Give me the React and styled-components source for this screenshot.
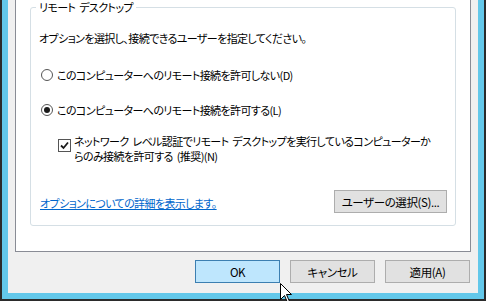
import React from "react";
import styled, { createGlobalStyle } from "styled-components";

const GlobalStyle = createGlobalStyle`
  html, body {
    margin: 0;
    padding: 0;
  }
  body {
    width: 486px;
    height: 301px;
    overflow: hidden;
    font-family: "Noto Sans CJK JP", "Noto Sans", sans-serif;
    font-feature-settings: "palt";
    letter-spacing: -0.6px;
    word-spacing: 2px;
    color: #000;
  }
`;

const Window = styled.div`
  position: relative;
  box-sizing: border-box;
  width: 486px;
  height: 301px;
  background: #63c8ea;
  border: 2px solid #2b2b2b;
  border-top: none;
  padding: 0 6px 6px;
`;

const Panel = styled.div`
  box-sizing: border-box;
  height: 293px;
  background: #f0f0f0;
  padding: 0 7px;
  display: flex;
  flex-direction: column;
`;

const TabPage = styled.div`
  box-sizing: border-box;
  height: 252px;
  background: #fff;
  border: 1px solid #898c95;
  border-top: none;
  padding: 0 14px;
`;

const GroupBox = styled.fieldset`
  margin: 0;
  padding: 0 8px 12px;
  border: 1px solid #d5dfe5;
  border-radius: 3px;
  display: flex;
  flex-direction: column;
  font-size: 11px;
`;

const Title = styled.legend`
  font-size: 11px;
  line-height: 14px;
  padding: 0 3px;
  margin-left: -3px;
`;

const Intro = styled.div`
  margin-top: 16px;
  line-height: 16px;
  white-space: nowrap;
`;

const OptionRow = styled.label`
  display: flex;
  align-items: center;
  gap: 4px;
  margin-top: ${(p) => p.$gap}px;
  margin-left: 2px;
  line-height: 16px;
  white-space: nowrap;
`;

const Radio = styled.span`
  box-sizing: border-box;
  width: 12px;
  height: 12px;
  border-radius: 50%;
  border: 1px solid #555;
  background: #fff;
  display: flex;
  align-items: center;
  justify-content: center;
  flex: none;

  &::after {
    content: "";
    width: 6px;
    height: 6px;
    border-radius: 50%;
    background: ${(p) => (p.$checked ? "#1a1a1a" : "transparent")};
  }
`;

const CheckRow = styled.label`
  display: flex;
  align-items: flex-start;
  gap: 3px;
  margin-top: 16px;
  margin-left: 19px;
  line-height: 15px;
  white-space: nowrap;
`;

const CheckBox = styled.span`
  box-sizing: border-box;
  width: 13px;
  height: 13px;
  margin-top: 5px;
  border: 1px solid #555;
  background: #fff;
  display: flex;
  align-items: center;
  justify-content: center;
  flex: none;
`;

const FooterRow = styled.div`
  display: flex;
  align-items: center;
  justify-content: space-between;
  margin-top: 26px;
`;

const Link = styled.a`
  color: #0066cc;
  text-decoration: underline;
  line-height: 16px;
  margin-left: 1px;
  margin-top: 3px;
  white-space: nowrap;
  cursor: pointer;
`;

const Button = styled.button`
  box-sizing: border-box;
  width: ${(p) => p.$width}px;
  height: 23px;
  padding: 0;
  font-family: inherit;
  font-feature-settings: "palt";
  letter-spacing: -0.4px;
  font-size: 11.5px;
  color: #000;
  background: ${(p) => (p.$primary ? "#bee6fd" : "#e1e1e1")};
  border: 1px solid ${(p) => (p.$primary ? "#3c7fb1" : "#adadad")};
  border-radius: 0;
`;

const ButtonBar = styled.div`
  display: flex;
  justify-content: flex-end;
  gap: 10px;
  padding: 8px 1px 0 0;
`;

const Cursor = styled.svg`
  position: absolute;
  left: 278px;
  top: 283px;
`;

export default function App() {
  return (
    <>
      <GlobalStyle />
      <Window>
        <Panel>
          <TabPage>
            <GroupBox>
              <Title>リモート デスクトップ</Title>
              <Intro>オプションを選択し、接続できるユーザーを指定してください。</Intro>
              <OptionRow $gap={21}>
                <Radio />
                このコンピューターへのリモート接続を許可しない(D)
              </OptionRow>
              <OptionRow $gap={19}>
                <Radio $checked />
                このコンピューターへのリモート接続を許可する(L)
              </OptionRow>
              <CheckRow>
                <CheckBox>
                  <svg width="9" height="9" viewBox="0 0 9 9">
                    <path d="M1 4.5 L3.5 7 L8 1.5" fill="none" stroke="#1a1a1a" strokeWidth="1.8" />
                  </svg>
                </CheckBox>
                <span>
                  ネットワーク レベル認証でリモート デスクトップを実行しているコンピューターか
                  <br />
                  らのみ接続を許可する (推奨)(N)
                </span>
              </CheckRow>
              <FooterRow>
                <Link>オプションについての詳細を表示します。</Link>
                <Button $width={113}>ユーザーの選択(S)...</Button>
              </FooterRow>
            </GroupBox>
          </TabPage>
          <ButtonBar>
            <Button $width={85} $primary>OK</Button>
            <Button $width={85}>キャンセル</Button>
            <Button $width={85}>適用(A)</Button>
          </ButtonBar>
        </Panel>
        <Cursor width="13" height="20" viewBox="0 0 13 20">
          <path d="M0.5 0.5 L0.5 16.5 L4.5 12.5 L7.5 19.5 L9.5 18.5 L6.5 11.5 L11.5 11.5 Z" fill="#fff" stroke="#000" strokeWidth="1" />
        </Cursor>
      </Window>
    </>
  );
}
